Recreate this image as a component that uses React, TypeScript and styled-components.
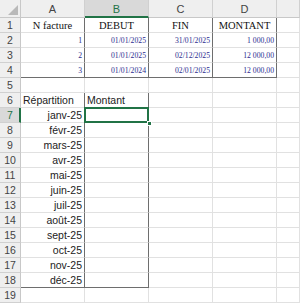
import React from "react";
import styled, { createGlobalStyle, css } from "styled-components";

const Global = createGlobalStyle`
  html, body { margin: 0; padding: 0; background: #ffffff; overflow: hidden; }
  #root { width: 300px; height: 303px; }
`;

const GRID = "#e1e1e1";
const DARK = "#6e6e6e";
const GREEN = "#217346";

const Sheet = styled.div`
  display: grid;
  grid-template-columns: 21px repeat(4, 64px) 1fr;
  grid-template-rows: 18px repeat(19, 15px);
  width: 300px;
  height: 303px;
  overflow: hidden;
  background: #ffffff;
`;

const Corner = styled.div`
  box-sizing: border-box;
  background: #efefef;
  border-right: 1px solid #c8c8c8;
  border-bottom: 1px solid #c8c8c8;
  display: flex;
  align-items: flex-end;
  justify-content: flex-end;
  padding: 0 2px 2px 0;
`;

const ColHeader = styled.div<{ $selected?: boolean }>`
  box-sizing: border-box;
  background: ${(p) => (p.$selected ? "#d9d9d9" : "#efefef")};
  color: ${(p) => (p.$selected ? GREEN : "#444444")};
  border-right: 1px solid #d0d0d0;
  border-bottom: ${(p) => (p.$selected ? `2px solid ${GREEN}` : "1px solid #c8c8c8")};
  font-family: "Liberation Sans", Arial, sans-serif;
  font-size: 11px;
  display: flex;
  align-items: center;
  justify-content: center;
  padding-top: ${(p) => (p.$selected ? "1px" : "0")};
`;

const RowHeader = styled.div<{ $selected?: boolean }>`
  box-sizing: border-box;
  background: ${(p) => (p.$selected ? "#d9d9d9" : "#efefef")};
  color: ${(p) => (p.$selected ? GREEN : "#444444")};
  border-right: ${(p) => (p.$selected ? `2px solid ${GREEN}` : "1px solid #c8c8c8")};
  border-bottom: 1px solid #d0d0d0;
  font-family: "Liberation Sans", Arial, sans-serif;
  font-size: 10.5px;
  display: flex;
  align-items: center;
  justify-content: center;
  padding-left: ${(p) => (p.$selected ? "1px" : "0")};
`;

type Kind = "title" | "num" | "label" | "month" | "empty";

const kindStyles: Record<Kind, ReturnType<typeof css>> = {
  title: css`
    font-family: "Liberation Serif", "Times New Roman", serif;
    font-size: 10.5px;
    color: #111111;
    justify-content: center;
    padding-bottom: 1px;
  `,
  num: css`
    font-family: "Liberation Serif", "Times New Roman", serif;
    font-size: 7.7px;
    color: #2c2c8e;
    justify-content: flex-end;
    padding-right: 2px;
    padding-bottom: 2px;
  `,
  label: css`
    font-family: "Liberation Sans", Arial, sans-serif;
    font-size: 10.5px;
    color: #222222;
    justify-content: flex-start;
    padding-left: 2px;
    padding-bottom: 1px;
  `,
  month: css`
    font-family: "Liberation Sans", Arial, sans-serif;
    font-size: 10.5px;
    color: #222222;
    justify-content: flex-end;
    padding-right: 2px;
    padding-bottom: 1px;
  `,
  empty: css``,
};

const Cell = styled.div<{ $kind: Kind; $darkRight?: boolean; $darkBottom?: boolean; $selected?: boolean }>`
  box-sizing: border-box;
  position: relative;
  display: flex;
  align-items: flex-end;
  white-space: nowrap;
  overflow: visible;
  border-right: 1px solid ${(p) => (p.$darkRight ? DARK : GRID)};
  border-bottom: 1px solid ${(p) => (p.$darkBottom ? DARK : GRID)};
  ${(p) => kindStyles[p.$kind]}
  ${(p) =>
    p.$selected &&
    css`
      &::before {
        content: "";
        position: absolute;
        left: -1px;
        top: -1px;
        right: -1px;
        bottom: -1px;
        border: 2px solid ${GREEN};
        z-index: 2;
      }
      &::after {
        content: "";
        position: absolute;
        right: -4px;
        bottom: -4px;
        width: 5px;
        height: 5px;
        background: ${GREEN};
        border: 1px solid #ffffff;
        box-sizing: border-box;
        z-index: 3;
      }
    `}
`;

const columns = ["A", "B", "C", "D", ""];

type CellDef = { text?: string; kind: Kind; darkRight?: boolean; darkBottom?: boolean; selected?: boolean };

const tableTop: string[][] = [
  ["N facture", "DEBUT", "FIN", "MONTANT"],
  ["1", "01/01/2025", "31/01/2025", "1 000,00"],
  ["2", "01/01/2025", "02/12/2025", "12 000,00"],
  ["3", "01/01/2024", "02/01/2025", "12 000,00"],
];

const months = [
  "janv-25",
  "févr-25",
  "mars-25",
  "avr-25",
  "mai-25",
  "juin-25",
  "juil-25",
  "août-25",
  "sept-25",
  "oct-25",
  "nov-25",
  "déc-25",
];

function buildRows(): CellDef[][] {
  const rows: CellDef[][] = [];
  // rows 1-4
  tableTop.forEach((r, i) => {
    const cells: CellDef[] = r.map((t) => ({
      text: t,
      kind: i === 0 ? "title" : "num",
      darkRight: true,
      darkBottom: i === 3,
    }));
    cells.push({ kind: "empty" });
    rows.push(cells);
  });
  // row 5
  rows.push([0, 1, 2, 3, 4].map(() => ({ kind: "empty" as Kind })));
  // row 6
  rows.push([
    { text: "Répartition", kind: "label", darkRight: true },
    { text: "Montant", kind: "label", darkRight: true },
    { kind: "empty" },
    { kind: "empty" },
    { kind: "empty" },
  ]);
  // rows 7-18
  months.forEach((m, i) => {
    const last = i === months.length - 1;
    rows.push([
      { text: m, kind: "month", darkRight: true, darkBottom: last },
      { kind: "empty", darkRight: true, darkBottom: last, selected: i === 0 },
      { kind: "empty" },
      { kind: "empty" },
      { kind: "empty" },
    ]);
  });
  // row 19
  rows.push([0, 1, 2, 3, 4].map(() => ({ kind: "empty" as Kind })));
  return rows;
}

const rows = buildRows();

export default function App() {
  return (
    <>
      <Global />
      <Sheet>
        <Corner>
          <svg width="10" height="10" viewBox="0 0 10 10">
            <polygon points="10,0 10,10 0,10" fill="#b9b9b9" />
          </svg>
        </Corner>
        {columns.map((c, i) => (
          <ColHeader key={`h${i}`} $selected={c === "B"}>
            {c}
          </ColHeader>
        ))}
        {rows.map((r, ri) => (
          <React.Fragment key={`r${ri}`}>
            <RowHeader $selected={ri === 6}>{ri + 1}</RowHeader>
            {r.map((cell, ci) => (
              <Cell
                key={`c${ri}-${ci}`}
                $kind={cell.kind}
                $darkRight={cell.darkRight}
                $darkBottom={cell.darkBottom}
                $selected={cell.selected}
              >
                {cell.text}
              </Cell>
            ))}
          </React.Fragment>
        ))}
      </Sheet>
    </>
  );
}
